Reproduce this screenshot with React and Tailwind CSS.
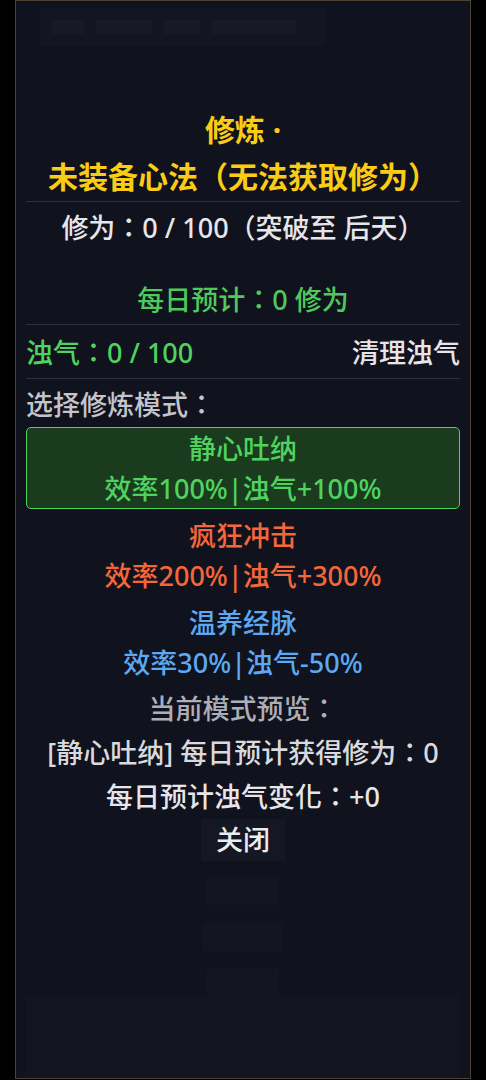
const modes = [
  { id: "calm", name: "静心吐纳", desc: "效率100%|浊气+100%", color: "text-[#4fd35f]" },
  { id: "frenzy", name: "疯狂冲击", desc: "效率200%|浊气+300%", color: "text-[#f5673a]" },
  { id: "nourish", name: "温养经脉", desc: "效率30%|浊气-50%", color: "text-[#5aa9f2]" },
];

const Divider = ({ className = "" }) => <div className={`h-px bg-[#2e313b] ${className}`} />;

export default function App() {
  const active = "calm";

  return (
    <div
      className="w-[486px] h-[1080px] bg-black overflow-hidden"
      style={{ fontFamily: '"Noto Sans", "Noto Sans CJK TC", sans-serif' }}
    >
      <div className="ml-[15px] w-[456px] h-[1079px] border border-[#4a4232] bg-[#10121d] px-[10px] flex flex-col">
        {/* faint header of the page underneath */}
        <div className="h-[105px] shrink-0">
          <div className="ml-[14px] mt-[7px] w-[285px] h-[38px] bg-[#131522] flex items-center gap-[12px] px-[12px]">
            <div className="w-[32px] h-[14px] bg-[#171a26]" />
            <div className="w-[56px] h-[14px] bg-[#171a26]" />
            <div className="w-[36px] h-[14px] bg-[#171a26]" />
            <div className="w-[84px] h-[14px] bg-[#171a26]" />
          </div>
        </div>

        {/* Title */}
        <h2 className="text-center text-[30px] font-bold text-[#facc15] leading-[47px]">
          <div>修炼 ·</div>
          <div>未装备心法（无法获取修为）</div>
        </h2>
        <Divider className="mt-[1px]" />

        <p className="mt-[6px] text-center text-[27px] font-medium leading-[40px] text-[#e6e6ea]">
          修为：0 / 100（突破至 后天）
        </p>

        <p className="mt-[32px] text-center text-[27px] font-medium leading-[40px] text-[#4fc95c]">
          每日预计：0 修为
        </p>
        <Divider className="mt-[4px]" />

        {/* Turbid qi */}
        <div className="mt-[8px] flex items-center justify-between text-[27px] font-medium leading-[40px]">
          <span className="text-[#4fd35f]">浊气：0 / 100</span>
          <button className="text-[#e6e6ea]">清理浊气</button>
        </div>
        <Divider className="mt-[5px]" />

        <p className="mt-[6px] text-[27px] font-medium leading-[40px] text-[#c4c4cc]">选择修炼模式：</p>

        {/* Modes */}
        <div className="mt-[2px] flex flex-col gap-[5px]">
          {modes.map((m) => {
            const isActive = m.id === active;
            return (
              <button
                key={m.id}
                className={`w-full h-[82px] pt-[1px] rounded-[5px] border flex flex-col justify-start text-center text-[27px] font-medium leading-[40px] ${
                  isActive ? "border-[#4ad35a] bg-[#1b3b1f]" : "border-transparent"
                } ${m.color}`}
              >
                <div className="shrink-0">{m.name}</div>
                <div className="shrink-0">{m.desc}</div>
              </button>
            );
          })}
        </div>

        {/* Preview */}
        <div className="mt-[4px] text-center text-[27px] font-medium leading-[44px]">
          <p className="text-[#aeaeb6]">当前模式预览：</p>
          <p className="text-[#d9d9de]">[静心吐纳] 每日预计获得修为：0</p>
          <p className="text-[#e6e6ea]">每日预计浊气变化：+0</p>
        </div>

        <div className="flex justify-center">
          <button className="h-[42px] px-[15px] bg-[#151722] text-[27px] font-medium leading-[42px] text-[#ececf0]">
            关闭
          </button>
        </div>

        {/* faint menu of the page underneath */}
        <div className="mt-[16px] flex flex-col items-center gap-[18px]">
          <div className="w-[72px] h-[28px] bg-[#131522]" />
          <div className="w-[80px] h-[28px] bg-[#131522]" />
          <div className="w-[72px] h-[26px] bg-[#131522]" />
        </div>

        {/* faint footer of the page underneath */}
        <div className="mt-auto h-[88px] bg-[#121420]" />
      </div>
    </div>
  );
}
